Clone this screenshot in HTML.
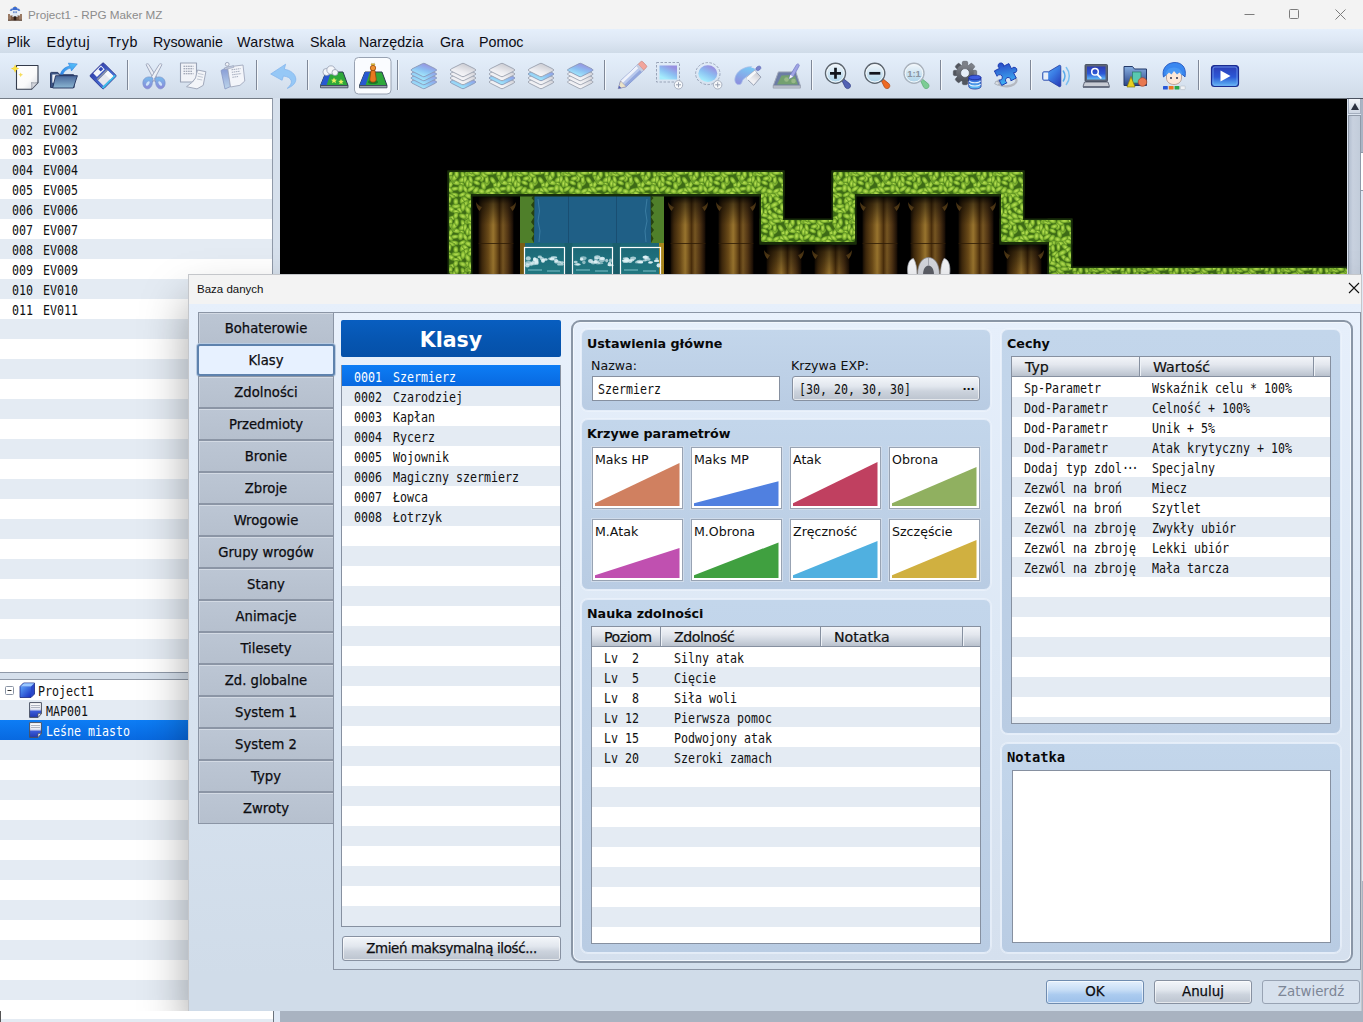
<!DOCTYPE html>
<html lang="pl"><head><meta charset="utf-8"><title>Project1 - RPG Maker MZ</title>
<style>
*{box-sizing:border-box;margin:0;padding:0}
html,body{width:1363px;height:1022px;overflow:hidden;background:#a9b3c1}
body{position:relative;font-family:"DejaVu Sans","Liberation Sans",sans-serif;font-size:13px;color:#101010}
.abs{position:absolute}
.m{font-family:"DejaVu Sans Mono","Liberation Mono",monospace;font-size:13.6px;display:inline-block;transform:scaleX(.855);transform-origin:0 50%;white-space:pre;line-height:20px}
#title{left:0;top:0;width:1363px;height:29px;background:#f3f3f3}
#title .t{left:28px;top:8px;font-family:"Liberation Sans",sans-serif;font-size:11.7px;color:#8c8c8c;white-space:pre}
#menu{left:0;top:29px;width:1363px;height:24px;background:linear-gradient(#e5effb,#dde7f4 50%,#cfdbe8)}
#menu span{position:absolute;top:5px;font-family:"Liberation Sans",sans-serif;font-size:14.3px;color:#0c0c14;white-space:pre}
#tool{left:0;top:53px;width:1363px;height:45px;background:linear-gradient(#e5effb,#dbe6f3 50%,#d0dbe8)}
.rows{background:repeating-linear-gradient(#fff 0,#fff 20px,#e4ebf3 20px,#e4ebf3 40px)}
.row{position:absolute;left:0;height:20px;white-space:pre}
</style></head><body>
<div id="title" class="abs"><span class="abs t">Project1 - RPG Maker MZ</span>
<svg class="abs" style="left:7px;top:6px" width="17" height="16" viewBox="7 6 17 16"><rect x="8" y="15" width="14" height="5.300" fill="#7a5a48"/><rect x="8" y="14" width="3" height="6.300" fill="#9a7a64"/><rect x="19" y="14" width="3" height="6.300" fill="#9a7a64"/><rect x="10" y="10.500" width="2.400" height="5" fill="#e8eef8"/><rect x="17.600" y="10.500" width="2.400" height="5" fill="#e8eef8"/><path d="M9.700 10.800l1.500-2.600 1.500 2.600zM17.300 10.800l1.500-2.600 1.500 2.600z" fill="#3a66c4"/><rect x="12.400" y="9.500" width="5.200" height="7.500" fill="#dfe8f6"/><path d="M12 10c0-2 1.300-3.300 3-3.300s3 1.300 3 3.300z" fill="#3c6cd0"/><rect x="14.700" y="5.800" width=".7" height="1.300" fill="#c8a030"/><rect x="13.300" y="11.300" width="1.200" height="1.800" fill="#4a70c0"/><rect x="15.500" y="11.300" width="1.200" height="1.800" fill="#4a70c0"/><rect x="13.700" y="16.300" width="2.600" height="4" fill="#2a1c18"/><rect x="8" y="19.800" width="14" height=".8" fill="#4a3428"/></svg>
<svg class="abs" style="left:1230px;top:0" width="133" height="29" viewBox="0 0 133 29" fill="none" stroke="#7c7c7c" stroke-width="1"><path d="M14.5 14.5h10"/><rect x="59.500" y="9.500" width="9" height="9" rx="1"/><path d="M105.500 9.500l10 10M115.500 9.500l-10 10"/></svg>
</div>
<div id="menu" class="abs">
<span style="left:7px">Plik</span>
<span style="left:46.5px;letter-spacing:.7px">Edytuj</span>
<span style="left:107.5px;letter-spacing:.6px">Tryb</span>
<span style="left:153px">Rysowanie</span>
<span style="left:237px;letter-spacing:.3px">Warstwa</span>
<span style="left:310px">Skala</span>
<span style="left:359px">Narzędzia</span>
<span style="left:440px">Gra</span>
<span style="left:479px">Pomoc</span>
</div>
<div class="abs" style="left:0;top:98px;width:273px;height:575px;border-right:1px solid #8f99a8;border-bottom:1px solid #8f99a8;border-top:1px solid #747c86;background:#fff"><div class="abs rows" style="left:0;top:0;width:272px;height:573px">
<div class="row" style="top:1px;left:12px"><span class="m">001</span><span class="m abs" style="left:31.300px;top:0">EV001</span></div>
<div class="row" style="top:21px;left:12px"><span class="m">002</span><span class="m abs" style="left:31.300px;top:0">EV002</span></div>
<div class="row" style="top:41px;left:12px"><span class="m">003</span><span class="m abs" style="left:31.300px;top:0">EV003</span></div>
<div class="row" style="top:61px;left:12px"><span class="m">004</span><span class="m abs" style="left:31.300px;top:0">EV004</span></div>
<div class="row" style="top:81px;left:12px"><span class="m">005</span><span class="m abs" style="left:31.300px;top:0">EV005</span></div>
<div class="row" style="top:101px;left:12px"><span class="m">006</span><span class="m abs" style="left:31.300px;top:0">EV006</span></div>
<div class="row" style="top:121px;left:12px"><span class="m">007</span><span class="m abs" style="left:31.300px;top:0">EV007</span></div>
<div class="row" style="top:141px;left:12px"><span class="m">008</span><span class="m abs" style="left:31.300px;top:0">EV008</span></div>
<div class="row" style="top:161px;left:12px"><span class="m">009</span><span class="m abs" style="left:31.300px;top:0">EV009</span></div>
<div class="row" style="top:181px;left:12px"><span class="m">010</span><span class="m abs" style="left:31.300px;top:0">EV010</span></div>
<div class="row" style="top:201px;left:12px"><span class="m">011</span><span class="m abs" style="left:31.300px;top:0">EV011</span></div>
</div></div>
<div class="abs" style="left:0;top:673px;width:273px;height:7px;background:#d6e0ec"></div>
<div class="abs" style="left:273px;top:98px;width:7px;height:924px;background:#d6e0ec"></div><div class="abs" style="left:274px;top:1011px;width:6px;height:11px;background:#dfe9f6;z-index:5"></div>
<div class="abs" style="left:0;top:679px;width:273px;height:343px;border-right:1px solid #8f99a8;border-top:1px solid #8f99a8;background:#fff"><div class="abs rows" style="left:0;top:0;width:272px;height:342px">
<div class="row" style="top:40px;width:272px;background:linear-gradient(#0d7df5,#0869e0)"></div>
<svg class="abs" style="left:5px;top:6px" width="10" height="10" viewBox="0 0 10 10"><rect x=".5" y=".5" width="8" height="8" rx="1" fill="#fff" stroke="#8a94a4"/><path d="M2.500 4.500h4" stroke="#333"/></svg>
<svg class="abs" style="left:19px;top:2px" width="17" height="17" viewBox="0 0 17 17"><defs><linearGradient id="cb" x1="0" y1="0" x2="1" y2="1"><stop offset="0" stop-color="#5aa0f8"/><stop offset="1" stop-color="#1a30c0"/></linearGradient></defs><path d="M1 4.500 L4.500 1h11v11L12 15.500H1z" fill="#2a48c8" stroke="#1a2a80" stroke-width=".8"/><rect x="1.500" y="4.500" width="10.500" height="10.500" fill="url(#cb)"/><path d="M1.500 4.500L4.800 1.300h10.500L12 4.500z" fill="#9ac8ff"/></svg>
<svg class="abs" style="left:29px;top:22px" width="13" height="16" viewBox="0 0 13 16"><defs><linearGradient id="mi22" x1="0" y1="0" x2="0" y2="1"><stop offset="0" stop-color="#ffffff"/><stop offset=".45" stop-color="#e8eaf2"/><stop offset=".6" stop-color="#3a5ad8"/><stop offset="1" stop-color="#2038b0"/></linearGradient></defs><path d="M.6.6h11.800v11L9 15.400H.6z" fill="url(#mi22)" stroke="#4a5264" stroke-width="1"/><path d="M2 3.500h9M2 5.500h9" stroke="#a0a6b4" stroke-width=".8"/><path d="M12.400 11.600H9v3.800z" fill="#f4f6fa" stroke="#4a5264" stroke-width=".7"/></svg>
<svg class="abs" style="left:29px;top:42px" width="13" height="16" viewBox="0 0 13 16"><defs><linearGradient id="mi42" x1="0" y1="0" x2="0" y2="1"><stop offset="0" stop-color="#ffffff"/><stop offset=".45" stop-color="#e8eaf2"/><stop offset=".6" stop-color="#3a5ad8"/><stop offset="1" stop-color="#2038b0"/></linearGradient></defs><path d="M.6.6h11.800v11L9 15.400H.6z" fill="url(#mi42)" stroke="#4a5264" stroke-width="1"/><path d="M2 3.500h9M2 5.500h9" stroke="#a0a6b4" stroke-width=".8"/><path d="M12.400 11.600H9v3.800z" fill="#f4f6fa" stroke="#4a5264" stroke-width=".7"/></svg>
<div class="row" style="top:1px;left:38px"><span class="m">Project1</span></div>
<div class="row" style="top:21px;left:46px"><span class="m">MAP001</span></div>
<div class="row" style="top:41px;left:46px;color:#fff"><span class="m">Leśne miasto</span></div>
</div></div>
<div class="abs" style="left:0;top:1011px;width:274px;height:11px;background:#fff;border-left:1px solid #555;border-right:1px solid #6a727c;z-index:5"></div>
<div class="abs" style="left:0;top:1019px;left:1px;width:272px;height:3px;background:#e4ebf3;z-index:6"></div>
<div class="abs" style="left:280px;top:1011px;width:1083px;height:11px;background:#a9b3c1;z-index:5"></div>
<div id="tool" class="abs">
<svg class="abs" style="left:0;top:0" width="1363" height="45" viewBox="0 53 1363 45">
<defs>
<linearGradient id="gPaper" x1="0" y1="0" x2="1" y2="1"><stop offset="0" stop-color="#ffffff"/><stop offset=".6" stop-color="#fafafa"/><stop offset="1" stop-color="#d4d8e0"/></linearGradient>
<linearGradient id="gFoldF" x1="0" y1="0" x2="0" y2="1"><stop offset="0" stop-color="#48669a"/><stop offset="1" stop-color="#8cb6d2"/></linearGradient>
<linearGradient id="gArr" x1="0" y1="1" x2="1" y2="0"><stop offset="0" stop-color="#2e86e8"/><stop offset="1" stop-color="#58c4fa"/></linearGradient>
<linearGradient id="gFlp" x1="0" y1="0" x2="1" y2="0"><stop offset="0" stop-color="#3444b0"/><stop offset="1" stop-color="#4a78dc"/></linearGradient>
<linearGradient id="gSci" x1="0" y1="0" x2="0" y2="1"><stop offset="0" stop-color="#78bcec"/><stop offset="1" stop-color="#8c86d8"/></linearGradient>
<linearGradient id="gClip" x1="0" y1="0" x2="0" y2="1"><stop offset="0" stop-color="#8498d4"/><stop offset="1" stop-color="#bcd4ea"/></linearGradient>
<linearGradient id="gSpill" x1=".6" y1="0" x2=".2" y2="1"><stop offset="0" stop-color="#7cc8f4"/><stop offset="1" stop-color="#8e8ede"/></linearGradient>
<linearGradient id="gGear" x1="0" y1="0" x2="0" y2="1"><stop offset="0" stop-color="#80848c"/><stop offset="1" stop-color="#4e525a"/></linearGradient>
<linearGradient id="gFold" x1="0" y1="0" x2="0" y2="1"><stop offset="0" stop-color="#86aee0"/><stop offset="1" stop-color="#2a4486"/></linearGradient>
<linearGradient id="gFoldB" x1="0" y1="0" x2="0" y2="1"><stop offset="0" stop-color="#4a6eb0"/><stop offset="1" stop-color="#6c9cd0"/></linearGradient>
<linearGradient id="gBlue" x1=".8" y1="0" x2=".2" y2="1"><stop offset=".1" stop-color="#9890e0"/><stop offset=".5" stop-color="#8cc0f2"/><stop offset=".9" stop-color="#a4ecfc"/></linearGradient>
<linearGradient id="gGray" x1=".8" y1="0" x2=".2" y2="1"><stop offset="0" stop-color="#c2c3ca"/><stop offset=".6" stop-color="#ececf0"/><stop offset="1" stop-color="#fbfbfd"/></linearGradient>
<linearGradient id="gLens" x1="0" y1="0" x2="0" y2="1"><stop offset="0" stop-color="#f4f8fc"/><stop offset="1" stop-color="#a8d0e8"/></linearGradient>
<linearGradient id="gPlay" x1="0" y1="0" x2="0" y2="1"><stop offset="0" stop-color="#2c3cb4"/><stop offset=".55" stop-color="#2c58d6"/><stop offset="1" stop-color="#62bcf6"/></linearGradient>
<linearGradient id="gSpk" x1="0" y1="0" x2="1" y2="1"><stop offset="0" stop-color="#62b4f6"/><stop offset=".5" stop-color="#3a7ce4"/><stop offset="1" stop-color="#2636b4"/></linearGradient>
<linearGradient id="gDb" x1="0" y1="0" x2="0" y2="1"><stop offset="0" stop-color="#2a50d0"/><stop offset="1" stop-color="#60c8f8"/></linearGradient>
<linearGradient id="gPz" x1=".6" y1="0" x2=".3" y2="1"><stop offset="0" stop-color="#2844c4"/><stop offset="1" stop-color="#3cacf2"/></linearGradient>
<g id="dm"><path d="M-1.200-6.400q1.200-.6 2.400 0l10.600 5.300q2.200 1.100 0 2.200l-10.600 5.300q-1.200.6-2.400 0l-10.600-5.300q-2.200-1.100 0-2.200z"/></g>
</defs>
<!-- separators -->
<g stroke="#7f8898" stroke-width="1"><path d="M127.500 60v30M256.500 60v30M307.500 60v30M397.500 60v30M604.500 60v30M811.500 60v30M940.500 60v30M1030.500 60v30M1198.500 60v30"/></g>
<g stroke="#f4f8fc" stroke-width="1"><path d="M128.500 60v30M257.500 60v30M308.500 60v30M398.500 60v30M605.500 60v30M812.500 60v30M941.500 60v30M1031.500 60v30M1199.500 60v30"/></g>

<!-- 1 new -->
<path d="M16.500 65.500H38V82.500L31.500 89.300H16.500z" fill="url(#gPaper)" stroke="#343c4c" stroke-width="1.100" stroke-linejoin="round"/>
<path d="M38 82.500c-2.500.6-4.800.5-6.500 0 .4 2.300.5 4.500 0 6.800z" fill="#d6d8de" stroke="#5a6272" stroke-width=".5" stroke-linejoin="round"/>
<path d="M15.100 64.300l1.200 3.100 3.100 1.200-3.100 1.200-1.200 3.100-1.200-3.100-3.100-1.200 3.100-1.200z" fill="#f8d428"/><circle cx="15.100" cy="68.600" r="2" fill="#fbe14a"/>
<path d="M20.700 72.400l.7 1.700 1.700.7-1.700.7-.7 1.700-.7-1.700-1.700-.7 1.700-.7z" fill="#f6dc58"/>
<!-- 2 open -->
<path d="M50.500 73.200c0-.5.300-.8.800-.8h6.500l2 2.300h13.500c.5 0 .8.300.8.800V87.500h-23.600z" fill="#3c5484" stroke="#22325c" stroke-width=".9" stroke-linejoin="round"/>
<path d="M52.300 74.500h6l2 2.300h11.500v6h-19.500z" fill="#eef2f8"/>
<path d="M55.600 75.700h21.800l-4 12.300H52.700z" fill="url(#gFoldF)" stroke="#22325c" stroke-width=".9" stroke-linejoin="round"/>
<path d="M60.300 74.300c1.200-4.300 4.500-7.300 9.300-8.200l-1.300-3 9 .8-5.800 7-1-2.800c-3.600.8-6.300 3-7.600 6.200z" fill="url(#gArr)" stroke="#2a78d8" stroke-width=".5" stroke-linejoin="round"/>
<!-- 3 save -->
<g transform="translate(103.100 75.900) rotate(45)"><rect x="-9.500" y="-9.500" width="19" height="19" rx="1.300" fill="url(#gFlp)" stroke="#2a3490" stroke-width=".9"/><rect x="7.300" y="-9" width="1.800" height="18" fill="#3cc0e8"/><rect x="-.5" y="-7.200" width="7.800" height="14" fill="#e6e8ee"/><rect x="-.5" y="-7.200" width="7.800" height="4.500" fill="#f8f9fb"/><rect x="-2.300" y="-7.200" width="1.800" height="14" fill="#8a92a8"/><rect x="-8.800" y="-5.800" width="5.300" height="11" fill="#f4f6fa"/><rect x="-8" y="-5" width="3.300" height="3.600" fill="#3048b8"/></g>
<!-- 4 scissors -->
<g stroke-linejoin="round"><path d="M146 64.500c.8-1 2.200-1 2.800 0l9.700 15.500-3.500 1.800z" fill="#e8ecf4" stroke="#98a2b8" stroke-width=".9"/><path d="M162 64.500c-.8-1-2.200-1-2.800 0l-9.700 15.500 3.500 1.800z" fill="#eef1f7" stroke="#98a2b8" stroke-width=".9"/>
<path d="M153 78c-3.500-1.800-7.500-1.300-9.300 1.800-1.800 3.200-.5 7.700 2.500 8.800 2.800 1 4.800-1.200 5.800-3.800z" fill="url(#gSci)" stroke="#7890cc" stroke-width=".7"/><path d="M155 78c3.500-1.800 7.500-1.300 9.300 1.800 1.800 3.200.5 7.700-2.500 8.800-2.800 1-4.800-1.200-5.800-3.800z" fill="url(#gSci)" stroke="#7890cc" stroke-width=".7"/>
<ellipse cx="147.800" cy="83.500" rx="1.400" ry="2.600" transform="rotate(35 147.800 83.500)" fill="#cfe4f8"/><ellipse cx="160.200" cy="83.500" rx="1.400" ry="2.600" transform="rotate(-35 160.200 83.500)" fill="#cfe4f8"/></g>
<!-- 5 copy -->
<path d="M180.500 63h16v15l-4 4h-12z" fill="#f1f3f8" stroke="#9aa3b6" stroke-width="1.100" stroke-linejoin="round"/>
<g stroke="#8a92a4" stroke-width="1.100" stroke-dasharray="1.600 .7"><path d="M183.500 66.300h10M183.500 68.800h10M183.500 71.300h9M183.500 73.800h10"/></g>
<path d="M197.500 70l8.400 1.700-2.700 13.700-6.200 3.500-10.500-2.200 6-4.700 3-4z" fill="#f3f5f9" stroke="#a2aabc" stroke-width="1" stroke-linejoin="round"/>
<g stroke="#b4bbc9" stroke-width=".8"><path d="M198 73.500l5.500 1.100M197.600 76.200l5.300 1.100M197 79l5.200 1"/></g>
<!-- 6 paste -->
<path d="M221 70.500l6.500-3.500 3 19.500-5.500 2.500z" fill="url(#gClip)" stroke="#8898c4" stroke-width=".8" stroke-linejoin="round"/>
<path d="M227.500 67l15.500-2 1.800 16-4.800 4.300-9.500 1.700z" fill="#f3f5fa" stroke="#a0a8bc" stroke-width=".9" stroke-linejoin="round"/>
<path d="M224.500 67.800l9-2.200.3 1.800-9 2.200z" fill="#c4cce0" stroke="#98a2b8" stroke-width=".6"/>
<circle cx="227.200" cy="64.300" r="1.900" fill="#eef1f7" stroke="#98a2b8" stroke-width=".9"/>
<g stroke="#9aa2b4" stroke-width=".9" stroke-dasharray="1.500 .6"><path d="M231.500 69.800l9-1.200M231.800 72.300l8-1.100M232.100 74.800l9-1.200M232.400 77.300l6-.8"/></g>
<!-- 7 undo -->
<path d="M270.700 74l14.900-9.800-1.300 5c6.500 1 11.200 4.800 11.500 9.800.2 3.800-2.800 7.200-8.600 9.400 3.300-2.800 4.700-5.300 4.100-7.600-.7-2.700-3.700-4.300-7.900-4.800l-1.300 4.300z" fill="#96c8f6" stroke="#7eb2ec" stroke-width=".7" stroke-linejoin="round"/>
<!-- 8 map -->
<path d="M326 72h17l5 13.500h-27.500z" fill="#2ea83a" stroke="#2a3a50" stroke-width="1" stroke-linejoin="round"/>
<path d="M326 72h5l-4.500 13.500h-6z" fill="#2858d0"/>
<path d="M320.500 85.500h27.500v2.300h-27.500z" fill="#9aa2ae" stroke="#3a4454" stroke-width=".8"/>
<g fill="#f4f6fa" stroke="#8a94a8" stroke-width=".7"><circle cx="326.500" cy="72" r="3.600"/><circle cx="331" cy="70" r="4.200"/><circle cx="335" cy="72.500" r="3"/></g>
<path d="M334 77.500l.9 2 2.100.2-1.600 1.400.5 2.100-1.900-1.100-1.900 1.100.5-2.100-1.600-1.400 2.100-.2z" fill="#e8f060"/>
<path d="M341 79l.8 1.800 1.900.2-1.400 1.300.4 1.900-1.700-1-1.700 1 .4-1.900-1.400-1.300 1.900-.2z" fill="#e8f060"/>
<!-- 9 event (selected) -->
<rect x="354.500" y="57.500" width="36.500" height="36.500" rx="4" fill="#fafcff" stroke="#98a2b2" stroke-width="1"/>
<path d="M365 72h17l5 13.500h-27.500z" fill="#2ea83a" stroke="#2a3a50" stroke-width="1" stroke-linejoin="round"/>
<path d="M365 72h5l-4.500 13.500h-6z" fill="#2858d0"/>
<path d="M359.500 85.500h27.500v2.300h-27.500z" fill="#9aa2ae" stroke="#3a4454" stroke-width=".8"/>
<ellipse cx="373" cy="82" rx="5" ry="2" fill="#1a7a28"/>
<path d="M371 70.500h4l1.200 8.500c.3 1.800-1 3.200-3.200 3.200s-3.500-1.400-3.200-3.200z" fill="#e87820" stroke="#8a3c08" stroke-width=".7"/>
<circle cx="373" cy="68" r="2.700" fill="#f09030" stroke="#8a3c08" stroke-width=".7"/>
<path d="M371 65l.8-1.800 1.200 1 1.200-1 .8 1.800z" fill="#f8d040" stroke="#8a6a08" stroke-width=".4"/>
<!-- layers -->
<use href="#dm" x="423.800" y="82.0" fill="url(#gBlue)" stroke="#8a98b8" stroke-width=".9"/><use href="#dm" x="423.800" y="78.0" fill="url(#gBlue)" stroke="#8a98b8" stroke-width=".9"/><use href="#dm" x="423.800" y="74.0" fill="url(#gBlue)" stroke="#8a98b8" stroke-width=".9"/><use href="#dm" x="423.800" y="70.0" fill="url(#gBlue)" stroke="#8a98b8" stroke-width=".9"/>
<use href="#dm" x="463" y="82.0" fill="url(#gBlue)" stroke="#8a98b8" stroke-width=".9"/><use href="#dm" x="463" y="78.0" fill="url(#gGray)" stroke="#9aa0ae" stroke-width=".9"/><use href="#dm" x="463" y="74.0" fill="url(#gGray)" stroke="#9aa0ae" stroke-width=".9"/><use href="#dm" x="463" y="70.0" fill="url(#gGray)" stroke="#9aa0ae" stroke-width=".9"/>
<use href="#dm" x="502" y="82.0" fill="url(#gGray)" stroke="#9aa0ae" stroke-width=".9"/><use href="#dm" x="502" y="78.0" fill="url(#gBlue)" stroke="#8a98b8" stroke-width=".9"/><use href="#dm" x="502" y="74.0" fill="url(#gGray)" stroke="#9aa0ae" stroke-width=".9"/><use href="#dm" x="502" y="70.0" fill="url(#gGray)" stroke="#9aa0ae" stroke-width=".9"/>
<use href="#dm" x="541" y="82.0" fill="url(#gGray)" stroke="#9aa0ae" stroke-width=".9"/><use href="#dm" x="541" y="78.0" fill="url(#gGray)" stroke="#9aa0ae" stroke-width=".9"/><use href="#dm" x="541" y="74.0" fill="url(#gBlue)" stroke="#8a98b8" stroke-width=".9"/><use href="#dm" x="541" y="70.0" fill="url(#gGray)" stroke="#9aa0ae" stroke-width=".9"/>
<use href="#dm" x="580.300" y="82.0" fill="url(#gGray)" stroke="#9aa0ae" stroke-width=".9"/><use href="#dm" x="580.300" y="78.0" fill="url(#gGray)" stroke="#9aa0ae" stroke-width=".9"/><use href="#dm" x="580.300" y="74.0" fill="url(#gGray)" stroke="#9aa0ae" stroke-width=".9"/><use href="#dm" x="580.300" y="70.0" fill="url(#gBlue)" stroke="#8a98b8" stroke-width=".9"/>
<!-- pencil -->
<g transform="translate(618.300 88.600) rotate(-43.500)"><path d="M0 0l7-4h24v8H7z" fill="#b8c8ec" stroke="#7484c0" stroke-width=".8" stroke-linejoin="round"/><path d="M7-4h24v3H7z" fill="#eef2fb"/><path d="M7 1.500h24V4H7z" fill="#93a8de"/><path d="M0 0l7-4v8z" fill="#ece4c8" stroke="#9a94a8" stroke-width=".5"/><path d="M0 0l2.600-1.500v3z" fill="#5060b8"/><path d="M31-4h3.800a1.400 1.400 0 011.400 1.400v5.200a1.400 1.400 0 01-1.400 1.400H31z" fill="#f2a59c" stroke="#c47c74" stroke-width=".6"/><path d="M28.500-4H31v8h-2.500z" fill="#c4cce0"/></g>
<!-- rect select -->
<rect x="656.500" y="62.500" width="23" height="19.500" fill="none" stroke="#9aa4b8" stroke-width="1" stroke-dasharray="2.500 1.500"/>
<rect x="659.500" y="65.500" width="17.500" height="14" fill="url(#gBlue)"/>
<circle cx="678.500" cy="84.800" r="4.200" fill="#f8fafc" stroke="#a0a8b8" stroke-width=".9"/><path d="M676 84.800h5M678.500 82.300v5" stroke="#98a0b0" stroke-width="1"/>
<!-- ellipse select -->
<ellipse cx="707.800" cy="73.600" rx="12.200" ry="11" fill="none" stroke="#9aa4b8" stroke-width="1" stroke-dasharray="2.500 1.500"/>
<ellipse cx="707.800" cy="73.600" rx="9.500" ry="8.300" fill="url(#gBlue)"/>
<circle cx="717.700" cy="84.800" r="4.200" fill="#f8fafc" stroke="#a0a8b8" stroke-width=".9"/><path d="M715.200 84.800h5M717.700 82.300v5" stroke="#98a0b0" stroke-width="1"/>
<!-- bucket -->
<path d="M735.800 83c-2-3-.5-8 2.500-11 3.500-3.500 8.500-5.500 13.400-5.200l4.100 3.100-12.300 9.200c-1.200 1.200-1.300 2.700-2 4.100-1 1.800-4.300 2-5.700-.2z" fill="url(#gSpill)" stroke="#a8bce8" stroke-width=".8" stroke-linejoin="round"/>
<path d="M746 78.100l8.700-7.700 6.200 6.700-7.200 8.200z" fill="url(#gGray)" stroke="#9098ac" stroke-width=".9" stroke-linejoin="round"/>
<path d="M746 78.100l8.700-7.700 1.800 2-8.800 7.800z" fill="#f6f8fa"/>
<path d="M751.500 67.300c2.500-.3 5 .3 7.300 1.800" fill="none" stroke="#e8eef8" stroke-width="1"/>
<ellipse cx="758.400" cy="68.300" rx="2.700" ry="2" transform="rotate(-35 758.400 68.300)" fill="#7a84cc" stroke="#5a64b0" stroke-width=".5"/>
<!-- shadow pen -->
<path d="M778.400 71.900h17.400l4.600 13.900h-27.200z" fill="#6c7ca4" stroke="#a0a8b8" stroke-width="1" stroke-linejoin="round"/>
<path d="M781.500 75.500l13-.5 3.500 9.500h-21z" fill="#74a070"/>
<circle cx="786.500" cy="79.500" r="2.300" fill="#98b888"/><circle cx="793.500" cy="81" r="2.300" fill="#98b888"/>
<path d="M773.200 85.800h27.200v2.300h-27.200z" fill="#c0c6d0" stroke="#9098a8" stroke-width=".7"/>
<path d="M789.100 78.800l1.300-4 6.200-10.300c.8-1.300 3.200-.2 2.600 1.300l-5.700 10.700z" fill="#a0a4e4" stroke="#7078c4" stroke-width=".7" stroke-linejoin="round"/>
<path d="M789.100 78.800l1.300-4 2.600 2z" fill="#f4f4fa"/>
<!-- zoom -->
<path d="M842.1 80.9l1.800-1.800 5.300 4.200c1.600 1.300 1.700 3.300.5 4.500s-3.200 1.100-4.500-.5z" fill="#5262b4" stroke="#2a3680" stroke-width=".7" stroke-linejoin="round"/><circle cx="835.5" cy="73.3" r="10" fill="url(#gLens)" stroke="#5e666f" stroke-width="1.400"/><circle cx="835.5" cy="73.3" r="8.700" fill="none" stroke="#f2f7fa" stroke-width="1"/><path d="M830 73.300h11M835.500 67.800v11" stroke="#10141c" stroke-width="2.700"/>
<path d="M881.4 80.9l1.800-1.800 5.300 4.200c1.600 1.300 1.700 3.300.5 4.500s-3.200 1.100-4.500-.5z" fill="#ee6a24" stroke="#a84010" stroke-width=".7" stroke-linejoin="round"/><circle cx="874.8" cy="73.3" r="10" fill="url(#gLens)" stroke="#5e666f" stroke-width="1.400"/><circle cx="874.8" cy="73.3" r="8.700" fill="none" stroke="#f2f7fa" stroke-width="1"/><path d="M869.300 73.300h11" stroke="#10141c" stroke-width="2.700"/>
<path d="M920.6 80.9l1.800-1.800 5.300 4.200c1.600 1.300 1.700 3.300.5 4.500s-3.200 1.100-4.500-.5z" fill="#7ccc94" stroke="#58a870" stroke-width=".7" stroke-linejoin="round"/><circle cx="914" cy="73.3" r="10" fill="url(#gLens)" stroke="#aab2bc" stroke-width="1.400"/><circle cx="914" cy="73.3" r="8.700" fill="none" stroke="#f2f7fa" stroke-width="1"/><text x="914" y="77" text-anchor="middle" font-family="Liberation Sans,sans-serif" font-weight="700" font-size="9.500" fill="#8a94a0">1:1</text>
<!-- gear + db -->
<g transform="translate(965 73)"><g fill="url(#gGear)" stroke="#4a4e56" stroke-width=".5"><g id="tooth"><rect x="-2.700" y="-11.700" width="5.400" height="23.400" rx="1.400"/></g><use href="#tooth" transform="rotate(45)"/><use href="#tooth" transform="rotate(90)"/><use href="#tooth" transform="rotate(135)"/></g><circle r="8.800" fill="url(#gGear)"/><circle r="4.400" fill="#e6eef8" stroke="#4a4e56" stroke-width=".6"/></g>
<g><path d="M968.800 77.500v9c0 1.400 2.700 2.500 6.100 2.500s6.100-1.100 6.100-2.500v-9z" fill="url(#gDb)" stroke="#1a2c98" stroke-width=".8"/><ellipse cx="974.900" cy="77.500" rx="6.100" ry="2.300" fill="#3c5ce0" stroke="#1a2c98" stroke-width=".8"/><path d="M969.300 80.800c.5 1.200 2.800 2 5.600 2s5.100-.8 5.600-2M969.300 84c.5 1.200 2.800 2 5.600 2s5.100-.8 5.600-2" fill="none" stroke="#e4f2fd" stroke-width="1.100"/></g>
<!-- puzzle -->
<path d="M998.500 80.500c-1.500 1.500-1 3.500 2 4.800 4 1.700 10 1.200 13.500-1 3-2 3.200-5 1-7" fill="none" stroke="#b4b8c0" stroke-width="2.300" stroke-linecap="round"/>
<path d="M996 81l3.600 1.600-1.300 2.800-3.600-1.600z" fill="#d8dce2" stroke="#9098a4" stroke-width=".6"/>
<g transform="translate(1005.300 74.500) rotate(-27) scale(1.250)"><path d="M-6.500-6.500h4.800a2.200 2.200 0 1 1 3.400 0h4.800v4.800a2.200 2.200 0 1 1 0 3.400v4.800h-4.800a2.200 2.200 0 1 0-3.400 0h-4.800v-4.800a2.200 2.200 0 1 0 0-3.400z" fill="url(#gPz)" stroke="#1c3cb0" stroke-width=".7" stroke-linejoin="round"/></g>
<!-- speaker -->
<path d="M1044 71.800h4.500l10.500-6.300c1-.6 1.800 0 1.800 1v19c0 1-.8 1.600-1.800 1l-10.500-6.300h-4.500c-.8 0-1.300-.5-1.300-1.300v-5.800c0-.8.500-1.300 1.300-1.300z" fill="url(#gSpk)" stroke="#2038a0" stroke-width=".8" stroke-linejoin="round"/>
<path d="M1043.400 72.500h4.800v7.100h-4.800z" fill="#e8eef8"/>
<g fill="none" stroke-linecap="round"><path d="M1063.300 71c2 3 2 7 0 10" stroke="#58aaea" stroke-width="1.500"/><path d="M1066.300 67.500c4 5 4 12 0 17" stroke="#7cc0f0" stroke-width="1.500"/></g>
<!-- laptop -->
<rect x="1085" y="64.500" width="22.500" height="17" rx="1" fill="#5c6476" stroke="#3a4252" stroke-width=".8"/>
<rect x="1087" y="66.500" width="18.500" height="13" fill="url(#gPlay)"/>
<circle cx="1095" cy="71.800" r="3.300" fill="none" stroke="#fff" stroke-width="1.500"/><path d="M1097.500 74.500l3.300 3.300" stroke="#fff" stroke-width="1.800" stroke-linecap="round"/>
<path d="M1084.500 82h23.500l1.500 4.500h-26.500z" fill="#c8ccd4" stroke="#4a5264" stroke-width=".8" stroke-linejoin="round"/><path d="M1083 86.500h26.500v1.500h-26.500z" fill="#6a7284"/>
<!-- folder + shapes -->
<path d="M1124 66.500h8.500l2 2.500h12v16.500h-22.500z" fill="url(#gFold)" stroke="#233868" stroke-width="1" stroke-linejoin="round"/>
<rect x="1132.500" y="72" width="8.500" height="11" fill="#58c8b0" stroke="#2a7868" stroke-width=".7"/>
<path d="M1131 76.500l4 10.500h-8z" fill="#e8d020" stroke="#8a7808" stroke-width=".7" stroke-linejoin="round"/>
<circle cx="1142.500" cy="82" r="4.300" fill="#e87850" stroke="#a84828" stroke-width=".7"/>
<!-- character -->
<path d="M1163.500 77c-2-8 3-14 10.500-14.500s13 5 11 14.500l-3-3-8-4.500-7 4.500z" fill="#3a88f0" stroke="#1a4cb8" stroke-width=".8" stroke-linejoin="round"/>
<path d="M1166.500 74c0-3 3-5 7.500-5s7.500 2 7.500 5v4c0 4-3.500 6.500-7.500 6.500s-7.500-2.500-7.500-6.500z" fill="#fce8d8" stroke="#a07868" stroke-width=".6"/>
<path d="M1165.500 76c0-5 3-8.500 8.500-8.500s8.500 3.500 8.500 8.500l-3-3.500-2.500 2-3-3.500-2.500 3.500-2.500-2z" fill="#4898f4"/>
<circle cx="1171" cy="78" r="1" fill="#2a3050"/><circle cx="1177" cy="78" r="1" fill="#2a3050"/>
<rect x="1163" y="86" width="4.800" height="3.600" rx=".6" fill="#2858d8"/><rect x="1168.800" y="86" width="4.800" height="3.600" rx=".6" fill="#e87820"/><rect x="1174.600" y="86" width="4.800" height="3.600" rx=".6" fill="#28a848"/><rect x="1180.400" y="86" width="4.800" height="3.600" rx=".6" fill="#f0f2f4" stroke="#a0a8b4" stroke-width=".4"/>
<!-- play -->
<rect x="1211.500" y="65.500" width="27" height="21" rx="3" fill="url(#gPlay)" stroke="#1a2c90" stroke-width="1.200"/>
<rect x="1213" y="67" width="24" height="18" rx="2" fill="none" stroke="#7aa8f0" stroke-width=".7"/>
<path d="M1220.500 70.500v11l10-5.500z" fill="#fff"/>
</svg></div>
<div class="abs" style="left:280px;top:98px;width:1068px;height:177px;background:#000;border-top:1px solid #6a727c;overflow:hidden">
<svg class="abs" style="left:0;top:0" width="1068" height="176" viewBox="280 99 1068 176">
<defs><radialGradient id="lf"><stop offset="0" stop-color="#bce058"/><stop offset=".5" stop-color="#93c63a"/><stop offset="1" stop-color="#5a8e20"/></radialGradient>
<pattern id="leaf" x="448" y="171" width="48" height="48" patternUnits="userSpaceOnUse"><rect width="48" height="48" fill="#3d6a16"/><ellipse cx="15.1" cy="4.5" rx="4.3" ry="2.2" transform="rotate(69 15.1 4.5)" fill="url(#lf)"/><ellipse cx="15.1" cy="52.5" rx="4.3" ry="2.2" transform="rotate(69 15.1 52.5)" fill="url(#lf)"/><ellipse cx="20.3" cy="24.9" rx="4.2" ry="2.6" transform="rotate(25 20.3 24.9)" fill="url(#lf)"/><ellipse cx="28.4" cy="24.4" rx="4.5" ry="2.7" transform="rotate(153 28.4 24.4)" fill="url(#lf)"/><ellipse cx="11.5" cy="39.0" rx="3.8" ry="2.3" transform="rotate(50 11.5 39.0)" fill="url(#lf)"/><ellipse cx="39.8" cy="38.4" rx="3.9" ry="2.3" transform="rotate(50 39.8 38.4)" fill="url(#lf)"/><ellipse cx="2.7" cy="13.6" rx="4.2" ry="2.2" transform="rotate(113 2.7 13.6)" fill="url(#lf)"/><ellipse cx="50.7" cy="13.6" rx="4.2" ry="2.2" transform="rotate(113 50.7 13.6)" fill="url(#lf)"/><ellipse cx="23.3" cy="30.7" rx="4.8" ry="2.3" transform="rotate(151 23.3 30.7)" fill="url(#lf)"/><ellipse cx="-4.4" cy="40.5" rx="3.6" ry="2.6" transform="rotate(13 -4.4 40.5)" fill="url(#lf)"/><ellipse cx="43.6" cy="40.5" rx="3.6" ry="2.6" transform="rotate(13 43.6 40.5)" fill="url(#lf)"/><ellipse cx="6.3" cy="23.9" rx="4.5" ry="2.4" transform="rotate(7 6.3 23.9)" fill="url(#lf)"/><ellipse cx="33.7" cy="40.7" rx="4.5" ry="2.0" transform="rotate(56 33.7 40.7)" fill="url(#lf)"/><ellipse cx="12.7" cy="12.4" rx="4.1" ry="2.0" transform="rotate(24 12.7 12.4)" fill="url(#lf)"/><ellipse cx="31.0" cy="34.6" rx="3.9" ry="2.1" transform="rotate(149 31.0 34.6)" fill="url(#lf)"/><ellipse cx="-2.0" cy="19.0" rx="4.4" ry="2.3" transform="rotate(8 -2.0 19.0)" fill="url(#lf)"/><ellipse cx="46.0" cy="19.0" rx="4.4" ry="2.3" transform="rotate(8 46.0 19.0)" fill="url(#lf)"/><ellipse cx="14.6" cy="28.9" rx="4.4" ry="2.6" transform="rotate(113 14.6 28.9)" fill="url(#lf)"/><ellipse cx="6.9" cy="17.7" rx="4.4" ry="2.1" transform="rotate(173 6.9 17.7)" fill="url(#lf)"/><ellipse cx="29.6" cy="41.3" rx="3.8" ry="2.0" transform="rotate(86 29.6 41.3)" fill="url(#lf)"/><ellipse cx="28.9" cy="29.2" rx="4.5" ry="2.1" transform="rotate(85 28.9 29.2)" fill="url(#lf)"/><ellipse cx="1.2" cy="35.8" rx="4.0" ry="2.5" transform="rotate(49 1.2 35.8)" fill="url(#lf)"/><ellipse cx="49.2" cy="35.8" rx="4.0" ry="2.5" transform="rotate(49 49.2 35.8)" fill="url(#lf)"/><ellipse cx="33.8" cy="6.9" rx="4.3" ry="2.5" transform="rotate(94 33.8 6.9)" fill="url(#lf)"/><ellipse cx="40.4" cy="23.2" rx="4.6" ry="2.6" transform="rotate(71 40.4 23.2)" fill="url(#lf)"/><ellipse cx="8.1" cy="11.7" rx="4.7" ry="2.5" transform="rotate(16 8.1 11.7)" fill="url(#lf)"/><ellipse cx="-4.0" cy="22.3" rx="4.1" ry="2.4" transform="rotate(23 -4.0 22.3)" fill="url(#lf)"/><ellipse cx="44.0" cy="22.3" rx="4.1" ry="2.4" transform="rotate(23 44.0 22.3)" fill="url(#lf)"/><ellipse cx="4.4" cy="-1.0" rx="4.1" ry="2.4" transform="rotate(164 4.4 -1.0)" fill="url(#lf)"/><ellipse cx="4.4" cy="47.0" rx="4.1" ry="2.4" transform="rotate(164 4.4 47.0)" fill="url(#lf)"/><ellipse cx="52.4" cy="-1.0" rx="4.1" ry="2.4" transform="rotate(164 52.4 -1.0)" fill="url(#lf)"/><ellipse cx="52.4" cy="47.0" rx="4.1" ry="2.4" transform="rotate(164 52.4 47.0)" fill="url(#lf)"/><ellipse cx="20.4" cy="2.3" rx="4.6" ry="2.7" transform="rotate(158 20.4 2.3)" fill="url(#lf)"/><ellipse cx="20.4" cy="50.3" rx="4.6" ry="2.7" transform="rotate(158 20.4 50.3)" fill="url(#lf)"/><ellipse cx="-0.9" cy="13.9" rx="4.4" ry="2.1" transform="rotate(83 -0.9 13.9)" fill="url(#lf)"/><ellipse cx="47.1" cy="13.9" rx="4.4" ry="2.1" transform="rotate(83 47.1 13.9)" fill="url(#lf)"/><ellipse cx="18.9" cy="-2.9" rx="4.6" ry="2.4" transform="rotate(130 18.9 -2.9)" fill="url(#lf)"/><ellipse cx="18.9" cy="45.1" rx="4.6" ry="2.4" transform="rotate(130 18.9 45.1)" fill="url(#lf)"/><ellipse cx="27.9" cy="19.0" rx="3.9" ry="2.6" transform="rotate(129 27.9 19.0)" fill="url(#lf)"/><ellipse cx="8.1" cy="35.2" rx="4.8" ry="2.4" transform="rotate(176 8.1 35.2)" fill="url(#lf)"/><ellipse cx="38.4" cy="12.4" rx="4.0" ry="2.6" transform="rotate(142 38.4 12.4)" fill="url(#lf)"/><ellipse cx="14.3" cy="23.6" rx="4.0" ry="2.1" transform="rotate(154 14.3 23.6)" fill="url(#lf)"/><ellipse cx="35.5" cy="14.9" rx="4.3" ry="2.5" transform="rotate(79 35.5 14.9)" fill="url(#lf)"/><ellipse cx="7.8" cy="30.6" rx="3.6" ry="2.6" transform="rotate(88 7.8 30.6)" fill="url(#lf)"/><ellipse cx="22.9" cy="3.5" rx="4.6" ry="2.1" transform="rotate(12 22.9 3.5)" fill="url(#lf)"/><ellipse cx="22.9" cy="51.5" rx="4.6" ry="2.1" transform="rotate(12 22.9 51.5)" fill="url(#lf)"/><ellipse cx="17.2" cy="18.1" rx="4.5" ry="2.1" transform="rotate(60 17.2 18.1)" fill="url(#lf)"/><ellipse cx="33.8" cy="-1.5" rx="4.2" ry="2.5" transform="rotate(27 33.8 -1.5)" fill="url(#lf)"/><ellipse cx="33.8" cy="46.5" rx="4.2" ry="2.5" transform="rotate(27 33.8 46.5)" fill="url(#lf)"/><ellipse cx="14.6" cy="8.7" rx="4.4" ry="2.7" transform="rotate(151 14.6 8.7)" fill="url(#lf)"/><ellipse cx="38.8" cy="8.8" rx="4.7" ry="2.1" transform="rotate(89 38.8 8.8)" fill="url(#lf)"/><ellipse cx="17.3" cy="28.4" rx="4.2" ry="2.2" transform="rotate(40 17.3 28.4)" fill="url(#lf)"/><ellipse cx="17.2" cy="33.1" rx="4.4" ry="2.4" transform="rotate(131 17.2 33.1)" fill="url(#lf)"/><ellipse cx="40.2" cy="19.9" rx="4.3" ry="2.2" transform="rotate(152 40.2 19.9)" fill="url(#lf)"/><ellipse cx="19.7" cy="38.8" rx="4.6" ry="2.6" transform="rotate(69 19.7 38.8)" fill="url(#lf)"/><ellipse cx="38.8" cy="-3.1" rx="4.6" ry="2.7" transform="rotate(37 38.8 -3.1)" fill="url(#lf)"/><ellipse cx="38.8" cy="44.9" rx="4.6" ry="2.7" transform="rotate(37 38.8 44.9)" fill="url(#lf)"/><ellipse cx="17.1" cy="8.5" rx="4.3" ry="2.1" transform="rotate(94 17.1 8.5)" fill="url(#lf)"/><ellipse cx="19.7" cy="12.5" rx="4.2" ry="2.4" transform="rotate(96 19.7 12.5)" fill="url(#lf)"/><ellipse cx="36.0" cy="24.4" rx="4.8" ry="2.4" transform="rotate(5 36.0 24.4)" fill="url(#lf)"/><ellipse cx="22.6" cy="-0.9" rx="4.6" ry="2.4" transform="rotate(72 22.6 -0.9)" fill="url(#lf)"/><ellipse cx="22.6" cy="47.1" rx="4.6" ry="2.4" transform="rotate(72 22.6 47.1)" fill="url(#lf)"/><ellipse cx="34.4" cy="27.9" rx="4.4" ry="2.0" transform="rotate(88 34.4 27.9)" fill="url(#lf)"/><ellipse cx="12.6" cy="17.1" rx="4.1" ry="2.7" transform="rotate(97 12.6 17.1)" fill="url(#lf)"/><ellipse cx="30.3" cy="7.4" rx="3.9" ry="2.3" transform="rotate(166 30.3 7.4)" fill="url(#lf)"/><ellipse cx="14.8" cy="-2.8" rx="4.1" ry="2.6" transform="rotate(23 14.8 -2.8)" fill="url(#lf)"/><ellipse cx="14.8" cy="45.2" rx="4.1" ry="2.6" transform="rotate(23 14.8 45.2)" fill="url(#lf)"/><ellipse cx="-2.4" cy="1.3" rx="4.2" ry="2.2" transform="rotate(162 -2.4 1.3)" fill="url(#lf)"/><ellipse cx="-2.4" cy="49.3" rx="4.2" ry="2.2" transform="rotate(162 -2.4 49.3)" fill="url(#lf)"/><ellipse cx="45.6" cy="1.3" rx="4.2" ry="2.2" transform="rotate(162 45.6 1.3)" fill="url(#lf)"/><ellipse cx="45.6" cy="49.3" rx="4.2" ry="2.2" transform="rotate(162 45.6 49.3)" fill="url(#lf)"/><ellipse cx="3.4" cy="38.4" rx="4.3" ry="2.6" transform="rotate(34 3.4 38.4)" fill="url(#lf)"/><ellipse cx="51.4" cy="38.4" rx="4.3" ry="2.6" transform="rotate(34 51.4 38.4)" fill="url(#lf)"/><ellipse cx="-2.7" cy="-1.8" rx="4.5" ry="2.0" transform="rotate(23 -2.7 -1.8)" fill="url(#lf)"/><ellipse cx="-2.7" cy="46.2" rx="4.5" ry="2.0" transform="rotate(23 -2.7 46.2)" fill="url(#lf)"/><ellipse cx="45.3" cy="-1.8" rx="4.5" ry="2.0" transform="rotate(23 45.3 -1.8)" fill="url(#lf)"/><ellipse cx="45.3" cy="46.2" rx="4.5" ry="2.0" transform="rotate(23 45.3 46.2)" fill="url(#lf)"/><ellipse cx="36.1" cy="3.8" rx="3.9" ry="2.5" transform="rotate(35 36.1 3.8)" fill="url(#lf)"/><ellipse cx="36.1" cy="51.8" rx="3.9" ry="2.5" transform="rotate(35 36.1 51.8)" fill="url(#lf)"/><ellipse cx="-3.2" cy="9.4" rx="4.0" ry="2.4" transform="rotate(58 -3.2 9.4)" fill="url(#lf)"/><ellipse cx="44.8" cy="9.4" rx="4.0" ry="2.4" transform="rotate(58 44.8 9.4)" fill="url(#lf)"/><ellipse cx="3.1" cy="25.1" rx="4.5" ry="2.1" transform="rotate(19 3.1 25.1)" fill="url(#lf)"/><ellipse cx="51.1" cy="25.1" rx="4.5" ry="2.1" transform="rotate(19 51.1 25.1)" fill="url(#lf)"/><ellipse cx="22.6" cy="13.0" rx="3.9" ry="2.1" transform="rotate(92 22.6 13.0)" fill="url(#lf)"/><ellipse cx="2.5" cy="2.9" rx="4.1" ry="2.3" transform="rotate(95 2.5 2.9)" fill="url(#lf)"/><ellipse cx="2.5" cy="50.9" rx="4.1" ry="2.3" transform="rotate(95 2.5 50.9)" fill="url(#lf)"/><ellipse cx="50.5" cy="2.9" rx="4.1" ry="2.3" transform="rotate(95 50.5 2.9)" fill="url(#lf)"/><ellipse cx="50.5" cy="50.9" rx="4.1" ry="2.3" transform="rotate(95 50.5 50.9)" fill="url(#lf)"/><ellipse cx="22.7" cy="8.5" rx="4.2" ry="2.1" transform="rotate(74 22.7 8.5)" fill="url(#lf)"/><ellipse cx="41.5" cy="28.3" rx="4.4" ry="2.4" transform="rotate(37 41.5 28.3)" fill="url(#lf)"/><ellipse cx="15.0" cy="35.9" rx="4.6" ry="2.4" transform="rotate(95 15.0 35.9)" fill="url(#lf)"/><ellipse cx="23.0" cy="34.3" rx="3.9" ry="2.5" transform="rotate(154 23.0 34.3)" fill="url(#lf)"/><ellipse cx="23.0" cy="17.8" rx="4.7" ry="2.2" transform="rotate(146 23.0 17.8)" fill="url(#lf)"/><ellipse cx="4.2" cy="7.9" rx="4.7" ry="2.2" transform="rotate(57 4.2 7.9)" fill="url(#lf)"/><ellipse cx="52.2" cy="7.9" rx="4.7" ry="2.2" transform="rotate(57 52.2 7.9)" fill="url(#lf)"/><ellipse cx="40.3" cy="1.9" rx="4.7" ry="2.1" transform="rotate(180 40.3 1.9)" fill="url(#lf)"/><ellipse cx="40.3" cy="49.9" rx="4.7" ry="2.1" transform="rotate(180 40.3 49.9)" fill="url(#lf)"/><ellipse cx="1.5" cy="18.7" rx="4.5" ry="2.2" transform="rotate(43 1.5 18.7)" fill="url(#lf)"/><ellipse cx="49.5" cy="18.7" rx="4.5" ry="2.2" transform="rotate(43 49.5 18.7)" fill="url(#lf)"/><ellipse cx="28.2" cy="-3.9" rx="4.6" ry="2.3" transform="rotate(17 28.2 -3.9)" fill="url(#lf)"/><ellipse cx="28.2" cy="44.1" rx="4.6" ry="2.3" transform="rotate(17 28.2 44.1)" fill="url(#lf)"/><ellipse cx="-4.4" cy="30.8" rx="3.8" ry="2.3" transform="rotate(142 -4.4 30.8)" fill="url(#lf)"/><ellipse cx="43.6" cy="30.8" rx="3.8" ry="2.3" transform="rotate(142 43.6 30.8)" fill="url(#lf)"/><ellipse cx="33.0" cy="36.3" rx="3.6" ry="2.1" transform="rotate(123 33.0 36.3)" fill="url(#lf)"/><ellipse cx="6.8" cy="6.3" rx="4.7" ry="2.7" transform="rotate(123 6.8 6.3)" fill="url(#lf)"/><ellipse cx="28.3" cy="1.8" rx="4.2" ry="2.5" transform="rotate(21 28.3 1.8)" fill="url(#lf)"/><ellipse cx="28.3" cy="49.8" rx="4.2" ry="2.5" transform="rotate(21 28.3 49.8)" fill="url(#lf)"/><ellipse cx="25.3" cy="40.5" rx="4.4" ry="2.1" transform="rotate(91 25.3 40.5)" fill="url(#lf)"/><ellipse cx="8.0" cy="40.6" rx="3.7" ry="2.0" transform="rotate(13 8.0 40.6)" fill="url(#lf)"/><ellipse cx="1.2" cy="28.6" rx="4.2" ry="2.4" transform="rotate(99 1.2 28.6)" fill="url(#lf)"/><ellipse cx="49.2" cy="28.6" rx="4.2" ry="2.4" transform="rotate(99 49.2 28.6)" fill="url(#lf)"/><ellipse cx="28.6" cy="11.8" rx="3.8" ry="2.1" transform="rotate(26 28.6 11.8)" fill="url(#lf)"/><ellipse cx="38.3" cy="33.8" rx="4.8" ry="2.6" transform="rotate(151 38.3 33.8)" fill="url(#lf)"/><ellipse cx="33.6" cy="20.3" rx="3.7" ry="2.7" transform="rotate(17 33.6 20.3)" fill="url(#lf)"/><ellipse cx="-1.9" cy="36.3" rx="4.5" ry="2.2" transform="rotate(83 -1.9 36.3)" fill="url(#lf)"/><ellipse cx="46.1" cy="36.3" rx="4.5" ry="2.2" transform="rotate(83 46.1 36.3)" fill="url(#lf)"/><ellipse cx="8.6" cy="3.1" rx="4.2" ry="2.3" transform="rotate(84 8.6 3.1)" fill="url(#lf)"/><ellipse cx="8.6" cy="51.1" rx="4.2" ry="2.3" transform="rotate(84 8.6 51.1)" fill="url(#lf)"/><ellipse cx="7.8" cy="-3.5" rx="3.6" ry="2.5" transform="rotate(108 7.8 -3.5)" fill="url(#lf)"/><ellipse cx="7.8" cy="44.5" rx="3.6" ry="2.5" transform="rotate(108 7.8 44.5)" fill="url(#lf)"/><ellipse cx="25.7" cy="25.1" rx="3.8" ry="2.3" transform="rotate(152 25.7 25.1)" fill="url(#lf)"/></pattern>
<linearGradient id="trunk" x1="0" y1="0" x2="1" y2="0"><stop offset="0" stop-color="#140c04"/><stop offset=".1" stop-color="#3e280c"/><stop offset=".28" stop-color="#6a4a18"/><stop offset=".42" stop-color="#98742e"/><stop offset=".5" stop-color="#7a5820"/><stop offset=".6" stop-color="#4a2e0c"/><stop offset=".7" stop-color="#765622"/><stop offset=".84" stop-color="#503414"/><stop offset="1" stop-color="#140a04"/></linearGradient>
<linearGradient id="tshade" x1="0" y1="0" x2="0" y2="1"><stop offset="0" stop-color="#000" stop-opacity=".95"/><stop offset=".3" stop-color="#000" stop-opacity=".45"/><stop offset="1" stop-color="#000" stop-opacity="0"/></linearGradient>
<linearGradient id="wfall" x1="0" y1="0" x2="0" y2="1"><stop offset="0" stop-color="#1c6676"/><stop offset="1" stop-color="#237c86"/></linearGradient>
</defs>
<rect x="478.5" y="195" width="35" height="80" fill="url(#trunk)"/><path d="M479.5 211c-2-2-3.500-5-3.500-9 2 3 4 4.500 6 5zM512.5 211c2-2 3.500-5 3.500-9-2 3-4 4.500-6 5z" fill="#7a5620"/><rect x="474.5" y="195" width="43" height="30" fill="url(#tshade)"/><path d="M478.5 243.500h35" stroke="#2e1c06" stroke-width="1.200" opacity=".8"/>
<rect x="670.5" y="195" width="35" height="80" fill="url(#trunk)"/><path d="M671.5 211c-2-2-3.500-5-3.500-9 2 3 4 4.500 6 5zM704.5 211c2-2 3.500-5 3.500-9-2 3-4 4.500-6 5z" fill="#7a5620"/><rect x="666.5" y="195" width="43" height="30" fill="url(#tshade)"/><path d="M670.5 243.500h35" stroke="#2e1c06" stroke-width="1.200" opacity=".8"/>
<rect x="718.5" y="195" width="35" height="80" fill="url(#trunk)"/><path d="M719.5 211c-2-2-3.500-5-3.500-9 2 3 4 4.500 6 5zM752.5 211c2-2 3.500-5 3.500-9-2 3-4 4.500-6 5z" fill="#7a5620"/><rect x="714.5" y="195" width="43" height="30" fill="url(#tshade)"/><path d="M718.5 243.500h35" stroke="#2e1c06" stroke-width="1.200" opacity=".8"/>
<rect x="862.5" y="195" width="35" height="80" fill="url(#trunk)"/><path d="M863.5 211c-2-2-3.500-5-3.500-9 2 3 4 4.500 6 5zM896.5 211c2-2 3.500-5 3.500-9-2 3-4 4.500-6 5z" fill="#7a5620"/><rect x="858.5" y="195" width="43" height="30" fill="url(#tshade)"/><path d="M862.5 243.500h35" stroke="#2e1c06" stroke-width="1.200" opacity=".8"/>
<rect x="910.5" y="195" width="35" height="80" fill="url(#trunk)"/><path d="M911.5 211c-2-2-3.500-5-3.500-9 2 3 4 4.500 6 5zM944.5 211c2-2 3.500-5 3.500-9-2 3-4 4.500-6 5z" fill="#7a5620"/><rect x="906.5" y="195" width="43" height="30" fill="url(#tshade)"/><path d="M910.5 243.500h35" stroke="#2e1c06" stroke-width="1.200" opacity=".8"/>
<rect x="958.5" y="195" width="35" height="80" fill="url(#trunk)"/><path d="M959.5 211c-2-2-3.500-5-3.500-9 2 3 4 4.500 6 5zM992.5 211c2-2 3.500-5 3.500-9-2 3-4 4.500-6 5z" fill="#7a5620"/><rect x="954.5" y="195" width="43" height="30" fill="url(#tshade)"/><path d="M958.5 243.500h35" stroke="#2e1c06" stroke-width="1.200" opacity=".8"/>
<rect x="766.5" y="243" width="35" height="32" fill="url(#trunk)"/><path d="M767.5 259c-2-2-3.500-5-3.500-9 2 3 4 4.500 6 5zM800.5 259c2-2 3.500-5 3.500-9-2 3-4 4.500-6 5z" fill="#7a5620"/><rect x="762.5" y="243" width="43" height="30" fill="url(#tshade)"/>
<rect x="814.5" y="243" width="35" height="32" fill="url(#trunk)"/><path d="M815.5 259c-2-2-3.500-5-3.500-9 2 3 4 4.500 6 5zM848.5 259c2-2 3.500-5 3.500-9-2 3-4 4.500-6 5z" fill="#7a5620"/><rect x="810.5" y="243" width="43" height="30" fill="url(#tshade)"/>
<rect x="1006.5" y="243" width="35" height="32" fill="url(#trunk)"/><path d="M1007.5 259c-2-2-3.500-5-3.500-9 2 3 4 4.500 6 5zM1040.5 259c2-2 3.500-5 3.500-9-2 3-4 4.500-6 5z" fill="#7a5620"/><rect x="1002.5" y="243" width="43" height="30" fill="url(#tshade)"/>
<rect x="520" y="195" width="144" height="48" fill="#4f7f2a"/>
<rect x="534" y="195" width="117" height="48" fill="#1f5f86"/>
<path d="M534.500 195l-3 3 2.500 3-3 4 3 4-3 4 3 4-3 5 3 4-3 4 3 4-2.500 4.500 2.500 4.500zM650.500 195l3 3-2.500 3 3 4-3 4 3 4-3 4 3 5-3 4 3 4-3 4 2.500 4.500-2.500 4.500z" fill="#27420f"/>
<path d="M568.500 195v48M616.500 195v48" stroke="#194e72" stroke-width="1"/>
<path d="M538 199l1.500 12-1.500 10 2 10-1 11M647 199l-1.500 12 1.500 10-2 10 1 11" stroke="#4f94b8" stroke-width=".8" fill="none" opacity=".7"/>
<rect x="520" y="243" width="144" height="32" fill="url(#wfall)"/>
<rect x="520" y="243" width="5" height="32" fill="#7a5c14"/><rect x="659" y="243" width="5" height="32" fill="#a8861c"/>
<rect x="564.500" y="243" width="8" height="32" fill="#1a5f6c"/><rect x="612.500" y="243" width="8" height="32" fill="#1a5f6c"/>
<ellipse cx="562.0" cy="262.6" rx="1.9" ry="1.3" fill="#e4f6fa" opacity="0.73"/><ellipse cx="556.1" cy="260.6" rx="2.0" ry="1.6" fill="#e4f6fa" opacity="0.89"/><ellipse cx="560.4" cy="264.4" rx="3.3" ry="1.2" fill="#e4f6fa" opacity="0.70"/><ellipse cx="542.0" cy="258.8" rx="2.1" ry="1.8" fill="#e4f6fa" opacity="0.69"/><ellipse cx="534.7" cy="259.1" rx="1.7" ry="1.9" fill="#e4f6fa" opacity="0.92"/><ellipse cx="550.2" cy="258.8" rx="2.0" ry="1.2" fill="#e4f6fa" opacity="0.71"/><ellipse cx="553.9" cy="257.4" rx="3.3" ry="1.2" fill="#e4f6fa" opacity="0.80"/><ellipse cx="535.1" cy="261.8" rx="3.5" ry="1.5" fill="#e4f6fa" opacity="0.69"/><ellipse cx="539.8" cy="256.9" rx="2.2" ry="1.4" fill="#e4f6fa" opacity="0.71"/><ellipse cx="552.3" cy="259.2" rx="2.5" ry="1.4" fill="#e4f6fa" opacity="0.93"/><ellipse cx="531.1" cy="264.1" rx="2.0" ry="2.1" fill="#e4f6fa" opacity="0.54"/><ellipse cx="536.8" cy="262.9" rx="1.9" ry="1.9" fill="#e4f6fa" opacity="0.87"/><ellipse cx="557.6" cy="262.1" rx="3.4" ry="1.5" fill="#e4f6fa" opacity="0.74"/><ellipse cx="545.5" cy="259.5" rx="2.2" ry="1.3" fill="#e4f6fa" opacity="0.86"/><ellipse cx="533.6" cy="263.4" rx="2.0" ry="1.0" fill="#e4f6fa" opacity="0.54"/><ellipse cx="536.4" cy="260.9" rx="1.9" ry="1.3" fill="#e4f6fa" opacity="0.55"/><ellipse cx="527.4" cy="265.4" rx="2.3" ry="2.1" fill="#e4f6fa" opacity="0.78"/><ellipse cx="528.6" cy="263.1" rx="3.4" ry="2.2" fill="#e4f6fa" opacity="0.62"/><ellipse cx="533.5" cy="263.7" rx="2.8" ry="1.6" fill="#e4f6fa" opacity="0.59"/><ellipse cx="543.0" cy="260.7" rx="2.0" ry="2.0" fill="#e4f6fa" opacity="0.95"/><ellipse cx="528.3" cy="258.4" rx="2.5" ry="2.2" fill="#e4f6fa" opacity="0.73"/><ellipse cx="535.8" cy="259.9" rx="2.8" ry="1.8" fill="#e4f6fa" opacity="0.80"/>
<path d="M528 270h14M547 271h13" stroke="#9adbe4" stroke-width="1" opacity=".8"/>
<rect x="524.5" y="247.500" width="40" height="40" fill="none" stroke="#fff" stroke-width="1.200"/>
<ellipse cx="594.7" cy="262.2" rx="3.4" ry="1.4" fill="#e4f6fa" opacity="0.60"/><ellipse cx="583.3" cy="258.2" rx="3.3" ry="1.9" fill="#e4f6fa" opacity="0.56"/><ellipse cx="610.6" cy="265.3" rx="3.2" ry="1.0" fill="#e4f6fa" opacity="0.78"/><ellipse cx="606.7" cy="260.6" rx="1.6" ry="1.8" fill="#e4f6fa" opacity="0.67"/><ellipse cx="593.2" cy="262.8" rx="2.7" ry="1.8" fill="#e4f6fa" opacity="0.52"/><ellipse cx="581.7" cy="259.0" rx="1.5" ry="1.4" fill="#e4f6fa" opacity="0.65"/><ellipse cx="610.5" cy="260.7" rx="1.6" ry="2.1" fill="#e4f6fa" opacity="0.60"/><ellipse cx="581.6" cy="259.5" rx="1.7" ry="1.3" fill="#e4f6fa" opacity="0.80"/><ellipse cx="583.9" cy="262.2" rx="1.7" ry="2.0" fill="#e4f6fa" opacity="0.56"/><ellipse cx="596.1" cy="258.8" rx="2.1" ry="1.8" fill="#e4f6fa" opacity="0.54"/><ellipse cx="609.5" cy="264.2" rx="1.8" ry="2.1" fill="#e4f6fa" opacity="0.85"/><ellipse cx="596.5" cy="261.5" rx="2.9" ry="1.6" fill="#e4f6fa" opacity="0.63"/><ellipse cx="597.3" cy="257.2" rx="3.1" ry="1.9" fill="#e4f6fa" opacity="0.73"/><ellipse cx="590.5" cy="261.0" rx="2.5" ry="2.1" fill="#e4f6fa" opacity="0.84"/><ellipse cx="595.5" cy="261.7" rx="1.5" ry="1.8" fill="#e4f6fa" opacity="0.86"/><ellipse cx="600.6" cy="263.2" rx="2.8" ry="1.1" fill="#e4f6fa" opacity="0.52"/><ellipse cx="597.9" cy="262.9" rx="2.3" ry="1.5" fill="#e4f6fa" opacity="0.52"/><ellipse cx="575.7" cy="262.1" rx="2.0" ry="1.3" fill="#e4f6fa" opacity="0.71"/><ellipse cx="577.5" cy="264.5" rx="3.3" ry="1.1" fill="#e4f6fa" opacity="0.74"/><ellipse cx="601.8" cy="260.0" rx="3.1" ry="2.0" fill="#e4f6fa" opacity="0.61"/><ellipse cx="602.2" cy="258.4" rx="2.8" ry="1.6" fill="#e4f6fa" opacity="0.88"/><ellipse cx="577.8" cy="264.3" rx="2.1" ry="1.1" fill="#e4f6fa" opacity="0.78"/>
<path d="M576 270h14M595 271h13" stroke="#9adbe4" stroke-width="1" opacity=".8"/>
<rect x="572.5" y="247.500" width="40" height="40" fill="none" stroke="#fff" stroke-width="1.200"/>
<ellipse cx="630.1" cy="261.2" rx="2.2" ry="1.8" fill="#e4f6fa" opacity="0.81"/><ellipse cx="645.4" cy="257.1" rx="2.5" ry="1.6" fill="#e4f6fa" opacity="0.94"/><ellipse cx="626.6" cy="259.3" rx="2.5" ry="1.9" fill="#e4f6fa" opacity="0.63"/><ellipse cx="639.8" cy="261.4" rx="3.5" ry="1.7" fill="#e4f6fa" opacity="0.64"/><ellipse cx="626.1" cy="261.1" rx="2.1" ry="1.1" fill="#e4f6fa" opacity="0.73"/><ellipse cx="658.8" cy="265.4" rx="2.3" ry="2.1" fill="#e4f6fa" opacity="0.92"/><ellipse cx="625.7" cy="258.6" rx="3.0" ry="1.3" fill="#e4f6fa" opacity="0.66"/><ellipse cx="644.7" cy="260.5" rx="2.1" ry="1.1" fill="#e4f6fa" opacity="0.66"/><ellipse cx="640.9" cy="262.1" rx="2.3" ry="1.2" fill="#e4f6fa" opacity="0.93"/><ellipse cx="647.5" cy="259.2" rx="3.0" ry="1.5" fill="#e4f6fa" opacity="0.67"/><ellipse cx="627.4" cy="259.9" rx="2.1" ry="1.4" fill="#e4f6fa" opacity="0.68"/><ellipse cx="656.8" cy="259.4" rx="1.5" ry="1.9" fill="#e4f6fa" opacity="0.61"/><ellipse cx="625.3" cy="260.7" rx="3.2" ry="1.1" fill="#e4f6fa" opacity="0.92"/><ellipse cx="650.2" cy="262.7" rx="2.1" ry="1.1" fill="#e4f6fa" opacity="0.80"/><ellipse cx="645.9" cy="257.3" rx="3.4" ry="1.5" fill="#e4f6fa" opacity="0.64"/><ellipse cx="650.8" cy="262.3" rx="2.4" ry="1.0" fill="#e4f6fa" opacity="0.84"/><ellipse cx="637.4" cy="262.2" rx="2.6" ry="1.2" fill="#e4f6fa" opacity="0.54"/><ellipse cx="656.6" cy="260.9" rx="2.7" ry="1.2" fill="#e4f6fa" opacity="0.89"/><ellipse cx="640.5" cy="262.4" rx="2.6" ry="1.2" fill="#e4f6fa" opacity="0.69"/><ellipse cx="633.1" cy="258.3" rx="3.0" ry="1.8" fill="#e4f6fa" opacity="0.68"/><ellipse cx="631.6" cy="260.2" rx="2.8" ry="1.1" fill="#e4f6fa" opacity="0.79"/><ellipse cx="625.7" cy="261.4" rx="3.1" ry="1.7" fill="#e4f6fa" opacity="0.70"/>
<path d="M624 270h14M643 271h13" stroke="#9adbe4" stroke-width="1" opacity=".8"/>
<rect x="620.5" y="247.500" width="40" height="40" fill="none" stroke="#fff" stroke-width="1.200"/>
<rect x="447.5" y="170.5" width="337" height="26.0" fill="#182e0a"/>
<rect x="447.5" y="170.5" width="25" height="106.0" fill="#182e0a"/>
<rect x="759.5" y="170.5" width="25" height="74.0" fill="#182e0a"/>
<rect x="759.5" y="218.5" width="97" height="26.0" fill="#182e0a"/>
<rect x="831.5" y="170.5" width="25" height="74.0" fill="#182e0a"/>
<rect x="831.5" y="170.5" width="193" height="26.0" fill="#182e0a"/>
<rect x="999.5" y="170.5" width="25" height="74.0" fill="#182e0a"/>
<rect x="999.5" y="218.5" width="73" height="26.0" fill="#182e0a"/>
<rect x="1047.5" y="218.5" width="25" height="58.0" fill="#182e0a"/>
<rect x="1047.5" y="266.5" width="301" height="11.0" fill="#182e0a"/>
<rect x="449" y="172" width="334" height="22" rx="2" fill="url(#leaf)"/>
<rect x="449" y="172" width="22" height="102" rx="2" fill="url(#leaf)"/>
<rect x="761" y="172" width="22" height="70" rx="2" fill="url(#leaf)"/>
<rect x="761" y="220" width="94" height="22" rx="2" fill="url(#leaf)"/>
<rect x="833" y="172" width="22" height="70" rx="2" fill="url(#leaf)"/>
<rect x="833" y="172" width="190" height="22" rx="2" fill="url(#leaf)"/>
<rect x="1001" y="172" width="22" height="70" rx="2" fill="url(#leaf)"/>
<rect x="1001" y="220" width="70" height="22" rx="2" fill="url(#leaf)"/>
<rect x="1049" y="220" width="22" height="54" rx="2" fill="url(#leaf)"/>
<rect x="1049" y="268" width="298" height="7" rx="2" fill="url(#leaf)"/>
<g><path d="M908 275c-1.500-9 1-16 5.500-16.500 2.500 4 3.500 10 3.500 16.500zM949.500 275c1.500-9-1-16-5.500-16.500-2.500 4-3.500 10-3.500 16.500z" fill="#f2f3f6" stroke="#a8acb4" stroke-width=".7"/><path d="M917.500 275c0-11 4.500-17.500 11-17.500s11 6.500 11 17.500z" fill="#d4d6dc" stroke="#7c8088" stroke-width=".7"/><path d="M923 275c0-6 2.500-9.500 5.500-9.500s5.500 3.500 5.500 9.500z" fill="#5c5e66"/><path d="M928.500 258v8" stroke="#9a9ca4" stroke-width=".8"/></g>
</svg></div>
<div class="abs" style="left:1347px;top:98px;width:16px;height:177px;background:#dbe4f0;border-top:1px solid #4a5260"><div class="abs" style="left:1px;top:0;width:13px;height:15px;background:linear-gradient(#f2f5fa,#cdd6e3);border:1px solid #a4aebe;border-top:none"></div><svg class="abs" style="left:4px;top:4px" width="8" height="7" viewBox="0 0 8 7"><path d="M4 0L8 7H0z" fill="#2a3040"/></svg><div class="abs" style="left:1px;top:16px;width:13px;height:161px;background:linear-gradient(90deg,#b4bfd0,#c8d1df 35%,#c2ccda);border:1px solid #8f99a8;border-bottom:none"></div><div class="abs" style="left:14px;top:0;width:2px;height:53px;background:#aab4c4"></div><div class="abs" style="left:14px;top:53px;width:2px;height:39px;background:#fff;border-top:1px solid #8f99a8;border-bottom:1px solid #8f99a8"></div><div class="abs" style="left:14px;top:92px;width:2px;height:85px;background:#e2eaf5"></div></div>
<style>
#dlg{left:189px;top:275px;width:1172px;height:736px;background:linear-gradient(#e6effb 30px,#dbe6f3 300px,#d0dce9 700px);box-shadow:0 0 0 1px #c4c6ca,0 26px 44px 0 rgba(0,0,0,.37)}
#dlg .tb{left:0;top:0;width:1172px;height:29px;background:#f3f3f3}
.tab{position:absolute;left:9px;width:136px;height:32px;background:linear-gradient(#bcc6d4,#b6c0ce);border:1px solid #8b95a5;box-shadow:inset 0 1px 0 #d3dae4,inset 1px 0 0 #c8d0dc;text-align:center;font-size:13.2px;line-height:32px;color:#0c0c10;-webkit-text-stroke:.25px #0c0c10}
.tab.sel{left:8px;width:138px;background:#e7f1ff;border:2px solid #5e82ad;border-radius:3px;line-height:30px;box-shadow:0 0 0 1px #b8cbe2}
.grp{position:absolute;background:linear-gradient(#c3d6eb,#b9cce3);border:1px solid #e4edf9;border-radius:7px;box-shadow:0 0 0 1px rgba(240,246,253,.55)}
.gt{position:absolute;font-weight:700;font-size:12.7px;white-space:pre;color:#080808}
.lb{position:absolute;font-size:12.6px;white-space:pre;color:#101010}
.btn{position:absolute;height:24px;border:1px solid #8791a1;border-radius:3px;background:linear-gradient(#f3f6fa,#e2e7ee 40%,#ccd3dd 62%,#bcc4cf);box-shadow:inset 0 0 0 1px rgba(255,255,255,.6);text-align:center;font-size:13.4px;line-height:21px;color:#0c0c10;-webkit-text-stroke:.25px #0c0c10}
.hdr{position:absolute;height:21px;background:linear-gradient(#f3f5f9,#e3e7ee 40%,#cbd2dc 75%,#b9c1cd);border:1px solid #8690a0;font-size:14.2px;line-height:21px}
.hdr span{position:absolute;top:0;white-space:pre;-webkit-text-stroke:.2px #111}
.hdr i{position:absolute;top:0;width:1px;height:19px;background:#8690a0;box-shadow:1px 0 0 #eef2f7}
.lst{position:absolute;border:1px solid #8690a0;overflow:hidden}
.pb{position:absolute;width:91px;height:62px;background:#fff;border:1px solid #98a3b3;box-shadow:0 0 0 1px #cfdbea}
.pb span{position:absolute;left:2px;top:4px;font-size:12.6px;white-space:pre;line-height:16px}
.pb svg{position:absolute;left:0;top:0}
</style>
<div id="dlg" class="abs">
<div class="abs tb"></div>
<span class="abs" style="left:8px;top:8px;white-space:pre;font-family:'Liberation Sans',sans-serif;font-size:11.5px;color:#111">Baza danych</span>
<svg class="abs" style="left:1159px;top:7px" width="12" height="12" viewBox="0 0 12 12"><path d="M1 1l10 10M11 1L1 11" stroke="#111" stroke-width="1.100"/></svg>
<div class="abs" style="left:144px;top:37px;width:1028px;height:658px;border:1px solid #8b95a5;background:linear-gradient(#e9f1fc,#dde8f5 40%,#d3dfec)"></div>
<div class="tab" style="top:37px">Bohaterowie</div>
<div class="tab sel" style="top:69px">Klasy</div>
<div class="tab" style="top:101px">Zdolności</div>
<div class="tab" style="top:133px">Przedmioty</div>
<div class="tab" style="top:165px">Bronie</div>
<div class="tab" style="top:197px">Zbroje</div>
<div class="tab" style="top:229px">Wrogowie</div>
<div class="tab" style="top:261px">Grupy wrogów</div>
<div class="tab" style="top:293px">Stany</div>
<div class="tab" style="top:325px">Animacje</div>
<div class="tab" style="top:357px">Tilesety</div>
<div class="tab" style="top:389px">Zd. globalne</div>
<div class="tab" style="top:421px">System 1</div>
<div class="tab" style="top:453px">System 2</div>
<div class="tab" style="top:485px">Typy</div>
<div class="tab" style="top:517px">Zwroty</div>
<div class="abs" style="left:152px;top:45px;width:220px;height:37px;background:linear-gradient(#085ec0,#0656b2 50%,#0550a8);border-radius:2px;text-align:center;color:#fff;font-weight:700;font-size:20.5px;line-height:40px">Klasy</div>
<div class="lst" style="left:152px;top:90px;width:220px;height:562px;background:#fff"><div class="abs rows" style="left:0;top:0;width:218px;height:560px"></div></div>
<div class="abs" style="left:153px;top:90px;width:218px;height:21px;background:linear-gradient(#0d7df5,#0869e0)"></div>
<span class="abs m" style="left:165px;top:92px;color:#fff;">0001</span>
<span class="abs m" style="left:203.60000000000002px;top:92px;color:#fff;">Szermierz</span>
<span class="abs m" style="left:165px;top:112px;">0002</span>
<span class="abs m" style="left:203.60000000000002px;top:112px;">Czarodziej</span>
<span class="abs m" style="left:165px;top:132px;">0003</span>
<span class="abs m" style="left:203.60000000000002px;top:132px;">Kapłan</span>
<span class="abs m" style="left:165px;top:152px;">0004</span>
<span class="abs m" style="left:203.60000000000002px;top:152px;">Rycerz</span>
<span class="abs m" style="left:165px;top:172px;">0005</span>
<span class="abs m" style="left:203.60000000000002px;top:172px;">Wojownik</span>
<span class="abs m" style="left:165px;top:192px;">0006</span>
<span class="abs m" style="left:203.60000000000002px;top:192px;">Magiczny szermierz</span>
<span class="abs m" style="left:165px;top:212px;">0007</span>
<span class="abs m" style="left:203.60000000000002px;top:212px;">Łowca</span>
<span class="abs m" style="left:165px;top:232px;">0008</span>
<span class="abs m" style="left:203.60000000000002px;top:232px;">Łotrzyk</span>
<div class="btn" style="left:153px;top:661px;width:219px;height:25px;line-height:23px;letter-spacing:-.35px">Zmień maksymalną ilość...</div>
<div class="abs" style="left:382px;top:45px;width:782px;height:643px;border:2px solid #8a96a6;border-radius:9px;background:linear-gradient(#e6effb,#dde8f5 50%,#d5e0ee);box-shadow:inset 0 0 0 1px #f2f7fd"></div>
<div class="grp" style="left:392px;top:54px;width:410px;height:82px"></div>
<span class="gt" style="left:398px;top:60.5px">Ustawienia główne</span>
<span class="lb" style="left:402px;top:83px">Nazwa:</span>
<span class="lb" style="left:602px;top:83px">Krzywa EXP:</span>
<div class="abs" style="left:403px;top:101px;width:188px;height:25px;background:#fff;border:1px solid #8690a0"></div>
<span class="abs m" style="left:408.5px;top:104px;">Szermierz</span>
<div class="btn" style="left:603px;top:101px;width:188px;height:25px"></div>
<span class="abs m" style="left:610px;top:104px;">[30, 20, 30, 30]</span>
<span class="abs" style="left:773.5px;top:104px;white-space:pre;font-size:11px;font-weight:700;letter-spacing:-.2px;line-height:16px">...</span>
<div class="grp" style="left:392px;top:144px;width:410px;height:171px"></div>
<span class="gt" style="left:398px;top:150.5px">Krzywe parametrów</span>
<div class="pb" style="left:403px;top:172px"><svg width="89" height="60" viewBox="0 0 89 60"><path d="M2 58V55.200L86.500 15.0V58z" fill="#d08060"/></svg><span>Maks HP</span></div>
<div class="pb" style="left:502px;top:172px"><svg width="89" height="60" viewBox="0 0 89 60"><path d="M2 58V55.200L86.500 33.3V58z" fill="#5080e0"/></svg><span>Maks MP</span></div>
<div class="pb" style="left:601px;top:172px"><svg width="89" height="60" viewBox="0 0 89 60"><path d="M2 58V55.200L86.500 14.0V58z" fill="#c04060"/></svg><span>Atak</span></div>
<div class="pb" style="left:700px;top:172px"><svg width="89" height="60" viewBox="0 0 89 60"><path d="M2 58V55.200L86.500 19.0V58z" fill="#90b060"/></svg><span>Obrona</span></div>
<div class="pb" style="left:403px;top:244px"><svg width="89" height="60" viewBox="0 0 89 60"><path d="M2 58V55.200L86.500 28.0V58z" fill="#c050b0"/></svg><span>M.Atak</span></div>
<div class="pb" style="left:502px;top:244px"><svg width="89" height="60" viewBox="0 0 89 60"><path d="M2 58V55.200L86.500 22.5V58z" fill="#40a040"/></svg><span>M.Obrona</span></div>
<div class="pb" style="left:601px;top:244px"><svg width="89" height="60" viewBox="0 0 89 60"><path d="M2 58V55.200L86.500 21.0V58z" fill="#50b0e0"/></svg><span>Zręczność</span></div>
<div class="pb" style="left:700px;top:244px"><svg width="89" height="60" viewBox="0 0 89 60"><path d="M2 58V55.200L86.500 20.0V58z" fill="#d0b040"/></svg><span>Szczęście</span></div>
<div class="grp" style="left:392px;top:324px;width:410px;height:354px"></div>
<span class="gt" style="left:398px;top:330.5px">Nauka zdolności</span>
<div class="hdr" style="left:402px;top:351px;width:390px"><span style="left:12px;letter-spacing:-.5px">Poziom</span><i style="left:68px"></i><span style="left:82px;letter-spacing:-.5px">Zdolność</span><i style="left:228px"></i><span style="left:242px">Notatka</span><i style="left:370px"></i></div>
<div class="lst rows" style="left:402px;top:372px;width:390px;height:297px;border-top:none"></div>
<span class="abs m" style="left:415px;top:373px;">Lv  2</span>
<span class="abs m" style="left:485px;top:373px;">Silny atak</span>
<span class="abs m" style="left:415px;top:393px;">Lv  5</span>
<span class="abs m" style="left:485px;top:393px;">Cięcie</span>
<span class="abs m" style="left:415px;top:413px;">Lv  8</span>
<span class="abs m" style="left:485px;top:413px;">Siła woli</span>
<span class="abs m" style="left:415px;top:433px;">Lv 12</span>
<span class="abs m" style="left:485px;top:433px;">Pierwsza pomoc</span>
<span class="abs m" style="left:415px;top:453px;">Lv 15</span>
<span class="abs m" style="left:485px;top:453px;">Podwojony atak</span>
<span class="abs m" style="left:415px;top:473px;">Lv 20</span>
<span class="abs m" style="left:485px;top:473px;">Szeroki zamach</span>
<div class="grp" style="left:812px;top:54px;width:340px;height:405px"></div>
<span class="gt" style="left:818px;top:60.5px">Cechy</span>
<div class="hdr" style="left:822px;top:81px;width:320px"><span style="left:13px">Typ</span><i style="left:127px"></i><span style="left:141px">Wartość</span><i style="left:301px"></i></div>
<div class="lst rows" style="left:822px;top:102px;width:320px;height:347px;border-top:none"></div>
<span class="abs m" style="left:834.8px;top:103px;">Sp-Parametr</span>
<span class="abs m" style="left:962.8px;top:103px;">Wskaźnik celu * 100%</span>
<span class="abs m" style="left:834.8px;top:123px;">Dod-Parametr</span>
<span class="abs m" style="left:962.8px;top:123px;">Celność + 100%</span>
<span class="abs m" style="left:834.8px;top:143px;">Dod-Parametr</span>
<span class="abs m" style="left:962.8px;top:143px;">Unik + 5%</span>
<span class="abs m" style="left:834.8px;top:163px;">Dod-Parametr</span>
<span class="abs m" style="left:962.8px;top:163px;">Atak krytyczny + 10%</span>
<span class="abs m" style="left:834.8px;top:183px;">Dodaj typ zdol<span style="letter-spacing:-2.6px">···</span></span>
<span class="abs m" style="left:962.8px;top:183px;">Specjalny</span>
<span class="abs m" style="left:834.8px;top:203px;">Zezwól na broń</span>
<span class="abs m" style="left:962.8px;top:203px;">Miecz</span>
<span class="abs m" style="left:834.8px;top:223px;">Zezwól na broń</span>
<span class="abs m" style="left:962.8px;top:223px;">Szytlet</span>
<span class="abs m" style="left:834.8px;top:243px;">Zezwól na zbroję</span>
<span class="abs m" style="left:962.8px;top:243px;">Zwykły ubiór</span>
<span class="abs m" style="left:834.8px;top:263px;">Zezwól na zbroję</span>
<span class="abs m" style="left:962.8px;top:263px;">Lekki ubiór</span>
<span class="abs m" style="left:834.8px;top:283px;">Zezwól na zbroję</span>
<span class="abs m" style="left:962.8px;top:283px;">Mała tarcza</span>
<div class="grp" style="left:812px;top:468px;width:340px;height:210px"></div>
<span class="gt" style="left:818px;top:473.5px;font-family:'DejaVu Sans Mono',monospace;font-size:13.8px">Notatka</span>
<div class="abs" style="left:823px;top:495px;width:319px;height:173px;background:#fff;border:1px solid #8690a0"></div>
<div class="btn" style="left:857px;top:705px;width:98px;background:linear-gradient(#e4f0fd,#c8def6 40%,#abcbef 62%,#9cc0ea);border-color:#6f8cb0">OK</div>
<div class="btn" style="left:965px;top:705px;width:98px">Anuluj</div>
<div class="btn" style="left:1073px;top:705px;width:98px;background:#d7e1ed;border-color:#98a3b3;color:#7d8696;-webkit-text-stroke:0;box-shadow:none">Zatwierdź</div>
</div>
<div class="abs" style="left:1362px;top:275px;width:1px;height:606px;background:#dfe8f4;z-index:4"></div><div class="abs" style="left:1362px;top:881px;width:1px;height:130px;background:#a9b3c1;z-index:4"></div>

</body></html>
